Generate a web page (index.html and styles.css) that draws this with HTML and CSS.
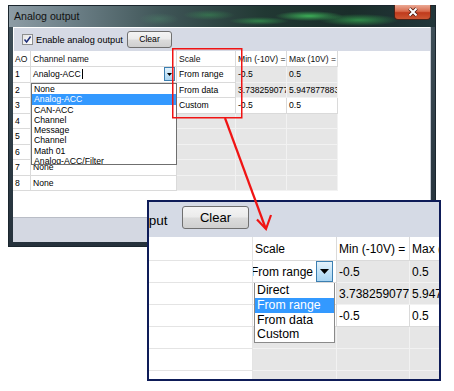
FILE: index.html
```html
<!DOCTYPE html>
<html lang="en">

<head>
    <meta charset="UTF-8">
    <title>Analog output</title>
    <link rel="stylesheet" href="styles.css">
</head>

<body>
    <div class="stage">
        <!-- Dialog window -->
        <div class="window">
            <div class="titlebar">
                <span class="title">Analog output</span>
                <span class="close-btn">
                    <svg width="14" height="10" viewBox="0 0 14 10">
                        <path d="M3.5 1.5 L10.5 8.5 M10.5 1.5 L3.5 8.5" stroke="#4a1a10" stroke-width="3.6" />
                        <path d="M3.5 1.5 L10.5 8.5 M10.5 1.5 L3.5 8.5" stroke="#fff" stroke-width="2" />
                    </svg>
                </span>
            </div>
            <div class="frame">
                <div class="client">
                    <div class="toolbar">
                        <span class="checkbox">
                            <svg width="9" height="9" viewBox="0 0 9 9">
                                <path d="M1.5 4.5 L3.6 7 L7.6 1.5" fill="none" stroke="#1f2f7a" stroke-width="1.5" />
                            </svg>
                        </span>
                        <span class="check-label">Enable analog output</span>
                        <button class="btn">Clear</button>
                    </div>

                    <div class="grid-area">
                        <div class="grid">
                            <div class="cell head">AO</div>
                            <div class="cell head">Channel name</div>
                            <div class="cell head">Scale</div>
                            <div class="cell head">Min (-10V) =</div>
                            <div class="cell head">Max (10V) =</div>

                            <div class="cell">1</div>
                            <div class="cell combo">Analog-ACC<span class="caret"></span>
                                <span class="drop-btn"><svg width="5" height="3" viewBox="0 0 5 3"><path d="M0 0 H5 L2.5 3 Z" fill="#000" /></svg></span>
                            </div>
                            <div class="cell">From range</div>
                            <div class="cell gray">-0.5</div>
                            <div class="cell gray">0.5</div>

                            <div class="cell">2</div>
                            <div class="cell">None</div>
                            <div class="cell">From data</div>
                            <div class="cell gray">3.7382590770</div>
                            <div class="cell gray">5.9478778839</div>

                            <div class="cell">3</div>
                            <div class="cell">None</div>
                            <div class="cell">Custom</div>
                            <div class="cell">-0.5</div>
                            <div class="cell">0.5</div>

                            <div class="cell">4</div>
                            <div class="cell">None</div>
                            <div class="cell gray"></div>
                            <div class="cell gray"></div>
                            <div class="cell gray"></div>

                            <div class="cell">5</div>
                            <div class="cell">None</div>
                            <div class="cell gray"></div>
                            <div class="cell gray"></div>
                            <div class="cell gray"></div>

                            <div class="cell">6</div>
                            <div class="cell">None</div>
                            <div class="cell gray"></div>
                            <div class="cell gray"></div>
                            <div class="cell gray"></div>

                            <div class="cell">7</div>
                            <div class="cell">None</div>
                            <div class="cell gray"></div>
                            <div class="cell gray"></div>
                            <div class="cell gray"></div>

                            <div class="cell">8</div>
                            <div class="cell">None</div>
                            <div class="cell gray"></div>
                            <div class="cell gray"></div>
                            <div class="cell gray"></div>
                        </div>

                        <!-- open channel list -->
                        <div class="dropdown">
                            <div>None</div>
                            <div class="selected">Analog-ACC</div>
                            <div>CAN-ACC</div>
                            <div>Channel</div>
                            <div>Message</div>
                            <div>Channel</div>
                            <div>Math 01</div>
                            <div>Analog-ACC/Filter</div>
                        </div>
                    </div>

                    <div class="statusbar"></div>
                </div>
            </div>
        </div>

        <!-- Zoomed detail of the Scale column -->
        <div class="inset">
            <div class="z-toolbar">
                <span class="z-label">output</span>
                <button class="btn z-btn">Clear</button>
            </div>
            <div class="z-grid">
                <div class="zc"></div>
                <div class="zc">Scale</div>
                <div class="zc">Min (-10V) =</div>
                <div class="zc">Max (10V) =</div>

                <div class="zc"></div>
                <div class="zc z-combo"><span class="z-combo-text">From range</span>
                    <span class="z-drop-btn"><svg width="9" height="5" viewBox="0 0 9 5"><path d="M0 0 H9 L4.5 5 Z" fill="#000" /></svg></span>
                </div>
                <div class="zc gray">-0.5</div>
                <div class="zc gray">0.5</div>

                <div class="zc"></div>
                <div class="zc">From data</div>
                <div class="zc gray">3.7382590770</div>
                <div class="zc gray">5.9478778839</div>

                <div class="zc"></div>
                <div class="zc">Custom</div>
                <div class="zc">-0.5</div>
                <div class="zc">0.5</div>

                <div class="zc"></div>
                <div class="zc gray"></div>
                <div class="zc gray"></div>
                <div class="zc gray"></div>

                <div class="zc"></div>
                <div class="zc gray"></div>
                <div class="zc gray"></div>
                <div class="zc gray"></div>

                <div class="zc"></div>
                <div class="zc gray"></div>
                <div class="zc gray"></div>
                <div class="zc gray"></div>
            </div>

            <div class="z-dropdown">
                <div>Direct</div>
                <div class="selected">From range</div>
                <div>From data</div>
                <div>Custom</div>
            </div>
        </div>

        <!-- Red callout -->
        <svg class="annotation" width="454" height="391" viewBox="0 0 454 391">
            <rect x="172.75" y="48.75" width="69" height="69" fill="none" stroke="#f01414" stroke-width="1.5" />
            <line x1="225" y1="118" x2="265.5" y2="228" stroke="#f01414" stroke-width="2.2" />
            <polyline points="257,219.5 266,229 271,215" fill="none" stroke="#f01414" stroke-width="2.2" />
        </svg>
    </div>
</body>

</html>
```

FILE: styles.css
```css
* {
    margin: 0;
    padding: 0;
    box-sizing: border-box;
}

body {
    background: #fff;
    font-family: 'Liberation Sans', Arial, sans-serif;
    color: #000;
}

.stage {
    position: relative;
    width: 454px;
    height: 391px;
    overflow: hidden;
}

/* Window frame */
.window {
    width: 428px;
    height: 242px;
    margin: 5px 0 0 8px;
    border: 1px solid #1b262e;
    display: flex;
    flex-direction: column;
    background:
        radial-gradient(ellipse 34px 5px at 300px 10px, rgba(70, 215, 100, 0.75), transparent),
        radial-gradient(ellipse 40px 6px at 350px 14px, rgba(60, 200, 90, 0.6), transparent),
        radial-gradient(ellipse 30px 4px at 250px 15px, rgba(60, 190, 90, 0.55), transparent),
        radial-gradient(ellipse 26px 5px at 200px 9px, rgba(60, 170, 90, 0.4), transparent),
        radial-gradient(ellipse 20px 6px at 150px 13px, rgba(80, 150, 110, 0.35), transparent),
        linear-gradient(90deg, #8d9ca5 0%, #6e8189 14%, #3f5557 36%, #213833 60%, #1a2d2a 80%, #22363a 100%);
}

.titlebar {
    height: 21px;
    display: flex;
    justify-content: space-between;
    align-items: flex-start;
}

.title {
    font-size: 10.6px;
    color: #111;
    padding: 4px 0 0 5px;
}

.close-btn {
    width: 37px;
    height: 15px;
    margin: -1px 4px 0 0;
    border: 1px solid #4d2218;
    border-top: none;
    border-radius: 0 0 4px 4px;
    background: linear-gradient(#eaa894, #d86a4c 45%, #c03a1c 55%, #cc5632);
    display: flex;
    align-items: center;
    justify-content: center;
}

.frame {
    flex: 1;
    padding: 0 4px 4px;
    background: linear-gradient(#3f4f58, #2c3a44 60%, #26323c);
}

.client {
    height: 100%;
    display: flex;
    flex-direction: column;
    background: #fff;
    border-right: 1px solid #c4c9d2;
}

/* Toolbar with checkbox and button */
.toolbar {
    height: 24px;
    display: flex;
    align-items: center;
    background: #d6dae5;
    border-top: 1px solid #fff;
    border-left: 1px solid #fff;
    font-size: 9.2px;
}

.checkbox {
    width: 11px;
    height: 11px;
    margin-left: 8px;
    border: 1px solid #8e8f8f;
    background: linear-gradient(135deg, #e4e4e4, #fff);
    display: flex;
    align-items: center;
    justify-content: center;
}

.check-label {
    width: 94px;
    padding-left: 3px;
}

.btn {
    width: 45px;
    height: 17px;
    margin-top: -1px;
    font-family: inherit;
    font-size: 8.6px;
    color: #000;
    border: 1px solid #707070;
    border-radius: 3px;
    background: linear-gradient(#f4f4f4, #ebebeb 48%, #dcdcdc 52%, #cfcfcf);
}

/* Data grid */
.grid-area {
    position: relative;
    flex: 1;
    background: #fff;
}

.grid {
    display: grid;
    grid-template-columns: 18px 146px 59px 51px 51px;
    grid-template-rows: 16px repeat(8, 15.5px);
    width: 325px;
    font-size: 8.6px;
}

.cell {
    display: flex;
    align-items: center;
    padding-left: 2px;
    white-space: nowrap;
    overflow: hidden;
    border-right: 1px solid #dadada;
    border-bottom: 1px solid #dadada;
}

.cell.head {
    color: #111;
}

.cell.gray {
    background: #e6e6e6;
    border-color: #f2f2f2;
}

.combo {
    position: relative;
}

.caret {
    display: inline-block;
    width: 1px;
    height: 10px;
    background: #000;
    margin-left: 1px;
}

.drop-btn {
    position: absolute;
    right: 1px;
    top: 0;
    width: 11px;
    height: 14px;
    border: 1px solid #3c7fb1;
    background: linear-gradient(#e5f3fc, #c4e3f7 50%, #a9d5f2);
    display: flex;
    align-items: center;
    justify-content: center;
}

.dropdown {
    position: absolute;
    left: 18px;
    top: 32px;
    width: 146px;
    height: 82px;
    border: 1px solid #6f6f6f;
    background: #fff;
    overflow: hidden;
    font-size: 8.7px;
}

.dropdown div {
    height: 10.25px;
    line-height: 10.25px;
    padding-left: 2px;
    white-space: nowrap;
}

.dropdown .selected,
.z-dropdown .selected {
    background: #3399ff;
    color: #fff;
}

.statusbar {
    height: 25px;
    background: #d4d8e2;
    border-top: 1px solid #b9bdc6;
}

/* Zoomed detail */
.inset {
    position: absolute;
    left: 147px;
    top: 200px;
    width: 294px;
    height: 181px;
    border: 2px solid #0e1c58;
    background: #fff;
    overflow: hidden;
    font-size: 12px;
}

.z-toolbar {
    height: 35px;
    display: flex;
    align-items: flex-start;
    background: #d5dae5;
}

.z-label {
    flex-shrink: 0;
    width: 38px;
    margin: 11px 0 0 -19px;
    font-size: 13.5px;
    white-space: nowrap;
}

.z-btn {
    flex-shrink: 0;
    width: 67px;
    height: 23px;
    margin: 4px 0 0 14px;
    font-size: 13px;
}

.z-grid {
    display: grid;
    grid-template-columns: 104px 84px 73px 73px;
    grid-template-rows: 24px repeat(6, 22px);
    width: 334px;
}

.zc {
    display: flex;
    align-items: center;
    padding-left: 2px;
    white-space: nowrap;
    overflow: hidden;
    border-right: 1px solid #dadada;
    border-bottom: 1px solid #dadada;
}

.zc:nth-child(4n+1) {
    border-right-color: #e4e4e4;
    border-bottom-color: #e4e4e4;
}

.zc.gray {
    background: #e6e6e6;
    border-color: #f2f2f2;
}

.z-combo {
    position: relative;
    padding-left: 0;
}

.z-combo-text {
    margin-left: -2px;
}

.z-drop-btn {
    position: absolute;
    right: 3px;
    top: 0;
    width: 17px;
    height: 21px;
    border: 1px solid #3c7fb1;
    background: linear-gradient(#e5f3fc, #c4e3f7 50%, #a9d5f2);
    display: flex;
    align-items: center;
    justify-content: center;
}

.z-dropdown {
    position: absolute;
    left: 105px;
    top: 81px;
    width: 81px;
    height: 60px;
    border: 1px solid #8a8a8a;
    border-top: none;
    background: #fff;
    overflow: hidden;
    font-size: 12.3px;
}

.z-dropdown div {
    height: 14.8px;
    line-height: 14.8px;
    padding-left: 2px;
    white-space: nowrap;
}

.annotation {
    position: absolute;
    left: 0;
    top: 0;
    pointer-events: none;
}
```
